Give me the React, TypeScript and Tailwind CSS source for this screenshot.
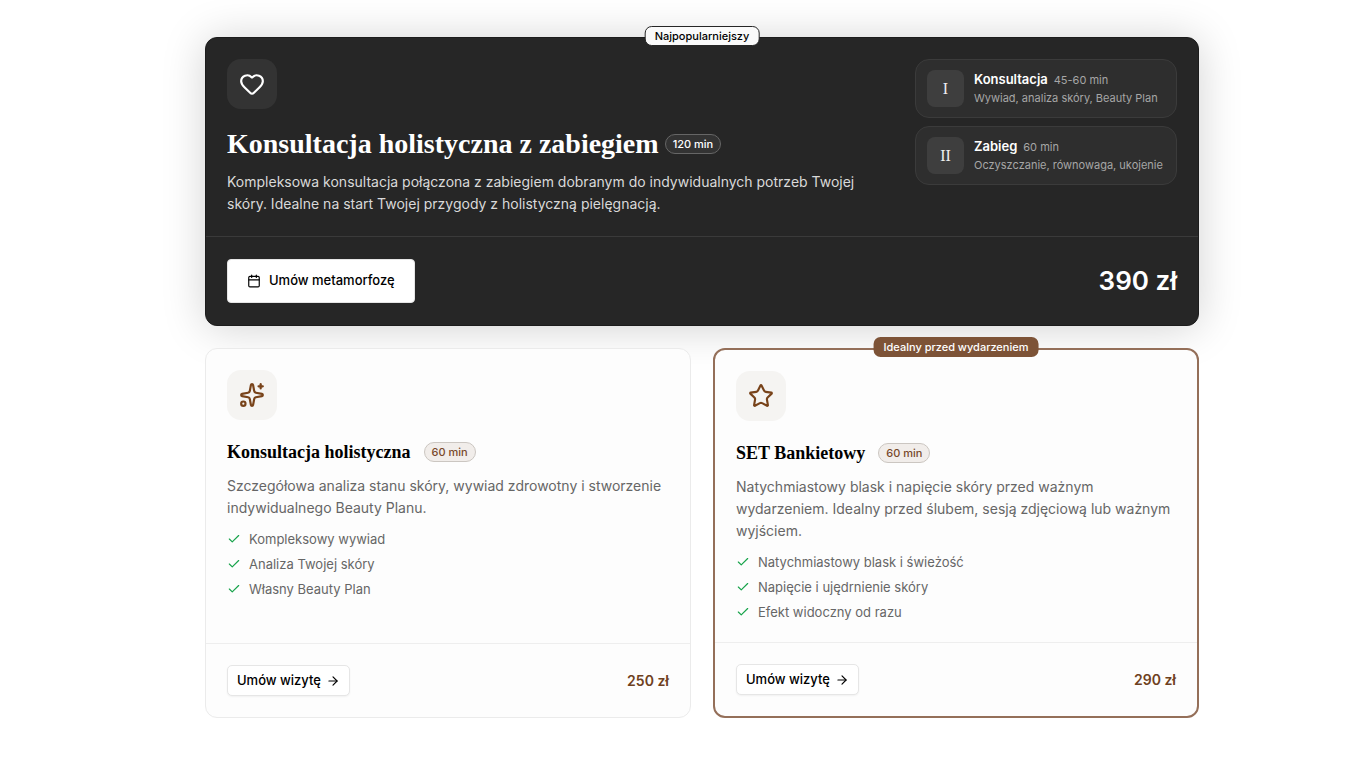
import type { ReactNode } from "react";
import { ArrowRight, Calendar, Check, Heart, Sparkles, Star } from "lucide-react";
import clsx from "clsx";

type Step = {
  numeral: string;
  name: string;
  duration: string;
  details: string;
};

type Offer = {
  title: string;
  duration: string;
  description: string;
  features: string[];
  price: string;
  icon: ReactNode;
  badge?: string;
};

const STEPS: Step[] = [
  {
    numeral: "I",
    name: "Konsultacja",
    duration: "45-60 min",
    details: "Wywiad, analiza skóry, Beauty Plan",
  },
  {
    numeral: "II",
    name: "Zabieg",
    duration: "60 min",
    details: "Oczyszczanie, równowaga, ukojenie",
  },
];

const OFFERS: Offer[] = [
  {
    title: "Konsultacja holistyczna",
    duration: "60 min",
    description:
      "Szczegółowa analiza stanu skóry, wywiad zdrowotny i stworzenie indywidualnego Beauty Planu.",
    features: ["Kompleksowy wywiad", "Analiza Twojej skóry", "Własny Beauty Plan"],
    price: "250 zł",
    icon: <Sparkles size={26} />,
  },
  {
    title: "SET Bankietowy",
    duration: "60 min",
    description:
      "Natychmiastowy blask i napięcie skóry przed ważnym wydarzeniem. Idealny przed ślubem, sesją zdjęciową lub ważnym wyjściem.",
    features: [
      "Natychmiastowy blask i świeżość",
      "Napięcie i ujędrnienie skóry",
      "Efekt widoczny od razu",
    ],
    price: "290 zł",
    icon: <Star size={26} />,
    badge: "Idealny przed wydarzeniem",
  },
];

function StepCard({ step }: { step: Step }) {
  return (
    <li className="flex min-w-[262px] items-center gap-[10px] rounded-[14px] border border-[#3b3b3b] bg-[#2e2e2e] px-[11px] py-[10px]">
      <span className="flex size-[37px] shrink-0 items-center justify-center rounded-lg bg-[#3e3e3e] font-['Liberation_Serif',serif] text-base text-[#f0f0f0]">
        {step.numeral}
      </span>
      <div className="whitespace-nowrap">
        <p className="flex items-baseline gap-[6px] leading-[18px]">
          <span className="text-[13px] font-semibold text-white">{step.name}</span>
          <span className="text-[11px] text-[#a6a6a6]">{step.duration}</span>
        </p>
        <p className="text-[11px] leading-[18px] text-[#a6a6a6]">{step.details}</p>
      </div>
    </li>
  );
}

function FeaturedCard() {
  return (
    <article className="relative rounded-xl border border-[#1c1c1c] bg-[#262626] text-white shadow-[0_2px_44px_rgba(0,0,0,0.18)]">
      <span className="absolute -top-3 left-1/2 -translate-x-1/2 rounded-[7px] border border-[#262626] bg-[#fafafa] px-[9px] text-[11px] leading-[18px] font-medium whitespace-nowrap text-black">
        Najpopularniejszy
      </span>
      <div className="flex items-start justify-between gap-8 p-[21px]">
        <div>
          <div className="flex size-[50px] items-center justify-center rounded-[14px] bg-[#333333]">
            <Heart size={26} />
          </div>
          <div className="mt-[18px] flex items-center gap-[6px]">
            <h2 className="font-['Liberation_Serif',serif] text-[28px] leading-[34px] font-bold">
              Konsultacja holistyczna z zabiegiem
            </h2>
            <span className="rounded-full border border-[#666666] bg-[#333333] px-[7px] text-[11px] leading-[18px] font-medium whitespace-nowrap">
              120 min
            </span>
          </div>
          <p className="mt-[10px] max-w-[660px] text-[14px] leading-[22px] text-[#d9d9d9]">
            Kompleksowa konsultacja połączona z zabiegiem dobranym do indywidualnych potrzeb Twojej
            skóry. Idealne na start Twojej przygody z holistyczną pielęgnacją.
          </p>
        </div>
        <ul className="flex shrink-0 flex-col gap-2">
          {STEPS.map((step) => (
            <StepCard key={step.name} step={step} />
          ))}
        </ul>
      </div>
      <div className="flex items-center justify-between border-t border-[#3a3a3a] px-[21px] py-[22px]">
        <button
          type="button"
          className="flex h-11 items-center gap-2 rounded border border-[#e5e5e5] bg-white px-[19px] text-[13px] font-medium text-black"
        >
          <Calendar size={14} />
          Umów metamorfozę
        </button>
        <p className="text-[26px] leading-8 font-semibold">390 zł</p>
      </div>
    </article>
  );
}

function OfferCard({ offer }: { offer: Offer }) {
  return (
    <article
      className={clsx(
        "relative flex flex-col rounded-xl bg-[#fdfdfd]",
        offer.badge ? "border-2 border-[#946f59]" : "border border-[#ebebeb]",
      )}
    >
      {offer.badge && (
        <span className="absolute -top-[13px] left-1/2 -translate-x-1/2 rounded-[7px] bg-[#7d5337] px-[10px] text-[11px] leading-[20px] font-medium whitespace-nowrap text-white">
          {offer.badge}
        </span>
      )}
      <div className="grow p-[21px]">
        <div className="flex size-[50px] items-center justify-center rounded-[14px] bg-[#f5f4f2] text-[#78431a]">
          {offer.icon}
        </div>
        <div className="mt-5 flex items-center gap-[13px]">
          <h3 className="font-['Liberation_Serif',serif] text-[18px] leading-6 font-bold text-black">
            {offer.title}
          </h3>
          <span className="rounded-full border border-[#cbc6c1] bg-[#f1edea] px-[7px] text-[11px] leading-[18px] font-medium whitespace-nowrap text-[#78492b]">
            {offer.duration}
          </span>
        </div>
        <p className="mt-[11px] text-[14px] leading-[22px] text-[#666666]">{offer.description}</p>
        <ul className="mt-[11px] flex flex-col gap-[7px]">
          {offer.features.map((feature) => (
            <li
              key={feature}
              className="flex items-center gap-2 text-[13px] leading-[18px] text-[#666666]"
            >
              <Check size={14} className="text-[#16a34a]" />
              {feature}
            </li>
          ))}
        </ul>
      </div>
      <div className="flex items-center justify-between border-t border-[#eeeeee] p-[21px]">
        <button
          type="button"
          className="flex h-[31px] items-center gap-[5px] rounded-[5px] border border-[#e6e6e6] bg-white px-[9px] text-[13px] font-medium text-black shadow-xs"
        >
          Umów wizytę
          <ArrowRight size={14} />
        </button>
        <p className="text-[14px] leading-5 font-semibold text-[#6e4020]">{offer.price}</p>
      </div>
    </article>
  );
}

export default function App() {
  return (
    <main className="min-h-screen bg-white pt-[37px] pr-[167px] pb-[50px] pl-[205px] font-['Inter',sans-serif]">
      <FeaturedCard />
      <section className="mt-[22px] grid grid-cols-2 gap-[22px]">
        {OFFERS.map((offer) => (
          <OfferCard key={offer.title} offer={offer} />
        ))}
      </section>
    </main>
  );
}
